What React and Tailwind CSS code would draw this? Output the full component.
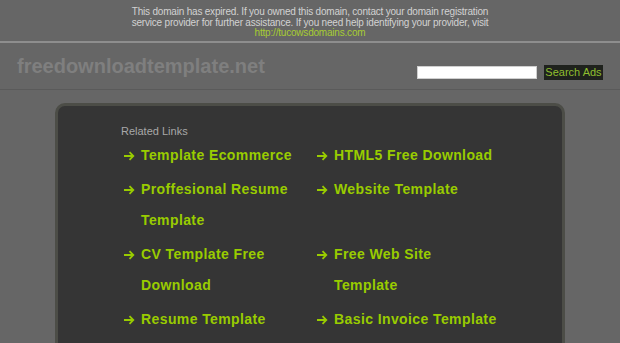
const links = [
  ['Template Ecommerce', 'HTML5 Free Download'],
  ['Proffesional Resume Template', 'Website Template'],
  ['CV Template Free Download', 'Free Web Site Template'],
  ['Resume Template', 'Basic Invoice Template'],
];

function Arrow() {
  return (
    <svg width="12" height="10" viewBox="0 0 12 10" className="shrink-0 mt-[11px]">
      <path d="M1 5h9.5M6.5 1.2l3.8 3.8-3.8 3.8" fill="none" stroke="#99cc00" strokeWidth="1.8" />
    </svg>
  );
}

function LinkItem({ text, width }) {
  return (
    <div className="flex mb-[3px]">
      <div className="w-[18px] shrink-0">
        <Arrow />
      </div>
      <a href="#" className={`${width} text-[14px] leading-[31px] font-bold tracking-[0.4px] text-[#99cc00]`}>
        {text}
      </a>
    </div>
  );
}

export default function App() {
  return (
    <div className="h-[343px] w-full overflow-hidden bg-[#666666] font-['Liberation_Sans',Arial,sans-serif]">
      <div className="h-[43px] border-b-2 border-[#8e8e8e] pt-[7px] text-center text-[10px] leading-[10.5px] tracking-[-0.2px] text-[#d2d2d2]">
        <p>This domain has expired. If you owned this domain, contact your domain registration</p>
        <p>service provider for further assistance. If you need help identifying your provider, visit</p>
        <a href="#" className="text-[#a6cc33]">http://tucowsdomains.com</a>
      </div>

      <div className="flex h-[47px] items-center justify-between border-b border-[#5a5a5a] pl-[17px] pr-[17px]">
        <h1 className="text-[20px] font-bold text-[#7f7f7f] mb-[1px]">freedownloadtemplate.net</h1>
        <div className="flex items-center gap-[7px] mt-[12px]">
          <input className="h-[13px] w-[120px] border border-[#cfcfcf] bg-white" />
          <button className="h-[15px] w-[59px] bg-[#1f221d] text-[11px] leading-[15px] text-[#8fbf2f]">Search Ads</button>
        </div>
      </div>

      <div className="mx-[55px] mt-[13px] h-[260px] rounded-[10px] border-[3px] border-[#4c4d47] bg-[#353535] pl-[63px] pt-[18px]">
        <h2 className="text-[11px] leading-[14px] text-[#a8a8a8]">Related Links</h2>
        <div className="ml-[2px] mt-[2px] grid grid-cols-[193px_186px]">
          {links.map(([a, b]) => (
            <div key={a} className="contents">
              <LinkItem text={a} width="w-[175px]" />
              <LinkItem text={b} width="w-[164px]" />
            </div>
          ))}
        </div>
      </div>
    </div>
  );
}
